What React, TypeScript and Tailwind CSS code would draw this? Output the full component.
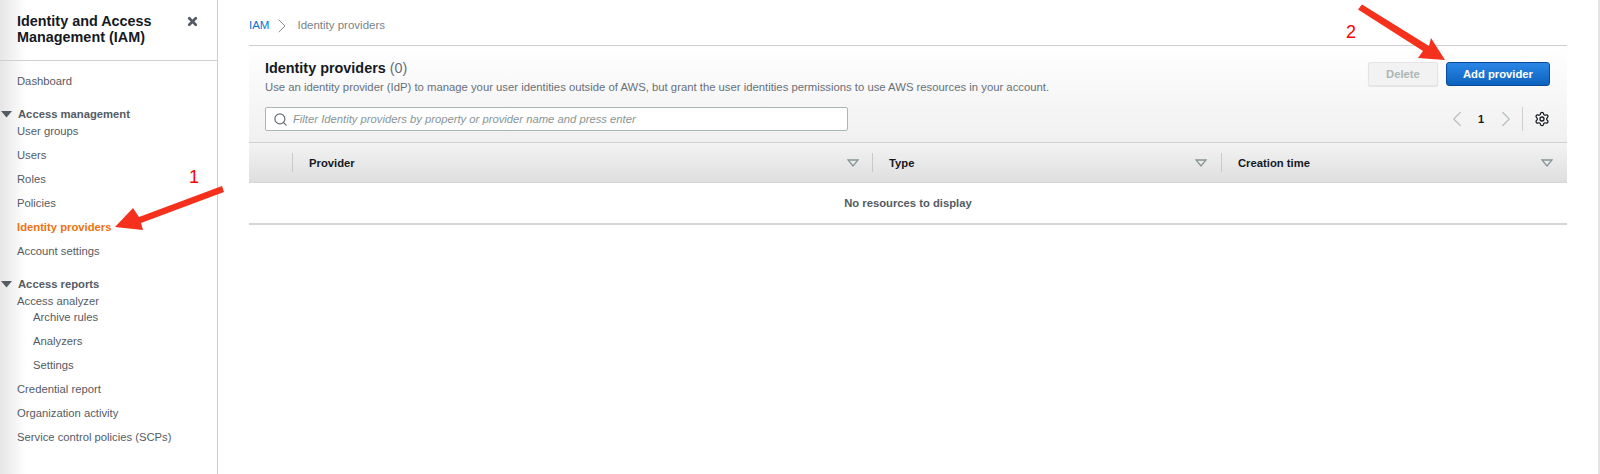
import { ChevronLeft, ChevronRight, Search, Settings, X } from "lucide-react";

function NavItem({ label, sub, active }: { label: string; sub?: boolean; active?: boolean }) {
  return (
    <div
      className={`h-6 flex items-center text-[11.25px] ${sub ? "pl-[33px]" : "pl-[17px]"} ${
        active ? "text-[#ec7211] font-bold" : "text-[#545b64]"
      }`}
    >
      {label}
    </div>
  );
}

function NavHeading({ label }: { label: string }) {
  return (
    <div className="h-[17px] flex items-center gap-[6px] pl-[1px] text-[11.25px] font-bold text-[#545b64]">
      <svg width="11" height="7" viewBox="0 0 11 7">
        <path d="M0 0h11L5.5 6.5z" fill="#545b64" />
      </svg>
      {label}
    </div>
  );
}

function HeaderCell({ label, caret }: { label: string; caret: string }) {
  return (
    <div className="relative flex items-center h-full">
      <div className="w-px h-[19px] bg-[#c9c9c9]" />
      <span className="pl-[16px] pt-[1px] text-[11.25px] font-bold text-[#16191f]">{label}</span>
      <svg className={`absolute top-[16px] ${caret}`} width="12" height="8" viewBox="0 0 12 8">
        <path d="M1 1h10L6 7z" fill="none" stroke="#879596" strokeWidth="1.3" />
      </svg>
    </div>
  );
}

export default function App() {
  return (
    <div className="flex h-[474px] w-[1600px] overflow-hidden bg-white relative font-['Liberation_Sans',Arial,sans-serif]">
      <aside className="w-[218px] shrink-0 border-r border-[#cfcfcf] bg-gradient-to-r from-[#e6e6e6] via-white via-[12%] to-white">
        <div className="h-[61px] border-b border-[#cfcfcf] pl-[17px] pr-[18px] pt-[13px] flex justify-between">
          <h1 className="text-[14.4px] leading-[16px] font-bold text-[#16191f]">
            Identity and Access
            <br />
            Management (IAM)
          </h1>
          <X size={13} strokeWidth={5} className="text-[#545b64] mt-[2px]" />
        </div>
        <div className="pt-[8px]">
          <NavItem label="Dashboard" />
        </div>
        <div className="mt-[13px]">
          <NavHeading label="Access management" />
          <div className="-mt-[4px]">
            <NavItem label="User groups" />
            <NavItem label="Users" />
            <NavItem label="Roles" />
            <NavItem label="Policies" />
            <NavItem label="Identity providers" active />
            <NavItem label="Account settings" />
          </div>
        </div>
        <div className="mt-[13px]">
          <NavHeading label="Access reports" />
          <div className="h-[16px] flex items-center pl-[17px] text-[11.25px] text-[#545b64]">Access analyzer</div>
          <div className="-mt-[4px]">
            <NavItem label="Archive rules" sub />
            <NavItem label="Analyzers" sub />
            <NavItem label="Settings" sub />
            <NavItem label="Credential report" />
            <NavItem label="Organization activity" />
            <NavItem label="Service control policies (SCPs)" />
          </div>
        </div>
      </aside>

      <main className="flex-1 pl-[31px] pr-[31px] border-r-2 border-[#e4e4e4]">
        <div className="h-[45px] flex items-center text-[11.5px] pt-[7px]">
          <span className="text-[#0972d3]">IAM</span>
          <ChevronRight size={24} strokeWidth={1} className="text-[#8d9396] mx-[1px]" />
          <span className="text-[#7c8286] ml-[2px]">Identity providers</span>
        </div>
        <section className="border-t border-[#cfcfcf]">
          <div className="h-[97px] bg-gradient-to-b from-white to-[#f0f0f0] border-b border-[#cfcfcf] px-[16px] pt-[12px] flex justify-between">
            <div>
              <div className="text-[14.4px] leading-[20px] font-bold text-[#16191f]">
                Identity providers <span className="font-normal text-[#687078]">(0)</span>
              </div>
              <p className="text-[11.3px] leading-[15px] mt-[2px] text-[#687078]">
                Use an identity provider (IdP) to manage your user identities outside of AWS, but grant the user identities permissions to use AWS resources in your account.
              </p>
              <div className="mt-[12px] w-[583px] h-[24px] bg-white border border-[#aab7b8] rounded-[2px] flex items-center pl-[7px] gap-[5px]">
                <Search size={15} className="text-[#687078]" />
                <span className="text-[11.25px] italic text-[#879596]">Filter Identity providers by property or provider name and press enter</span>
              </div>
            </div>
            <div className="flex flex-col items-end mr-[1px] pt-[4px]">
              <div className="flex gap-[8px]">
                <div className="w-[70px] h-[24px] rounded-[2px] border border-[#e4e4e4] bg-[#f2f2f2] shadow-[0_1px_1px_rgba(0,0,0,0.08)] flex items-center justify-center text-[11.25px] font-bold text-[#aab7b8]">
                  Delete
                </div>
                <div className="w-[104px] h-[24px] rounded-[3px] border border-[#0a4a99] bg-gradient-to-b from-[#2a86e6] to-[#0b63bd] flex items-center justify-center text-[11.25px] font-bold text-white">
                  Add provider
                </div>
              </div>
              <div className="flex items-center h-[24px] mt-[21px]">
                <ChevronLeft size={26} strokeWidth={1} className="text-[#b4bcbe]" />
                <span className="w-[16px] ml-[3px] mr-[4px] text-center text-[11px] font-bold text-[#16191f]">1</span>
                <ChevronRight size={26} strokeWidth={1} className="text-[#b4bcbe]" />
                <div className="w-px h-[24px] bg-[#cfcfcf] ml-[3px] mr-[11px]" />
                <Settings size={16} strokeWidth={1.9} className="text-[#16191f]" />
              </div>
            </div>
          </div>
          <div className="grid grid-cols-[43px_580px_349px_1fr] h-[40px] bg-gradient-to-b from-[#f3f3f3] to-[#dfdfdf] border-b border-[#d5d5d5]">
            <div />
            <HeaderCell label="Provider" caret="right-[13px]" />
            <HeaderCell label="Type" caret="right-[14px]" />
            <HeaderCell label="Creation time" caret="right-[14px]" />
          </div>
          <div className="h-[42px] flex items-center justify-center border-b-2 border-[#d5d5d5] text-[11.25px] font-bold text-[#545b64]">
            No resources to display
          </div>
        </section>
      </main>

      {/* red annotations drawn on top of the screenshot */}
      <svg className="absolute inset-0 pointer-events-none" width="1600" height="474" viewBox="0 0 1600 474">
        <path d="M222 186L139 217L133 208L115 227L143 230L141 223L224 192z" fill="#f5301c" />
        <path d="M1362 4.500L1429 46L1431 38L1445 60L1418 58L1423 51L1358 9.500z" fill="#f5301c" />
      </svg>
      <span className="absolute left-[189px] top-[167px] text-[18px] leading-[20px] text-[#f00]">1</span>
      <span className="absolute left-[1346px] top-[22px] text-[18px] leading-[20px] text-[#f00]">2</span>
    </div>
  );
}
